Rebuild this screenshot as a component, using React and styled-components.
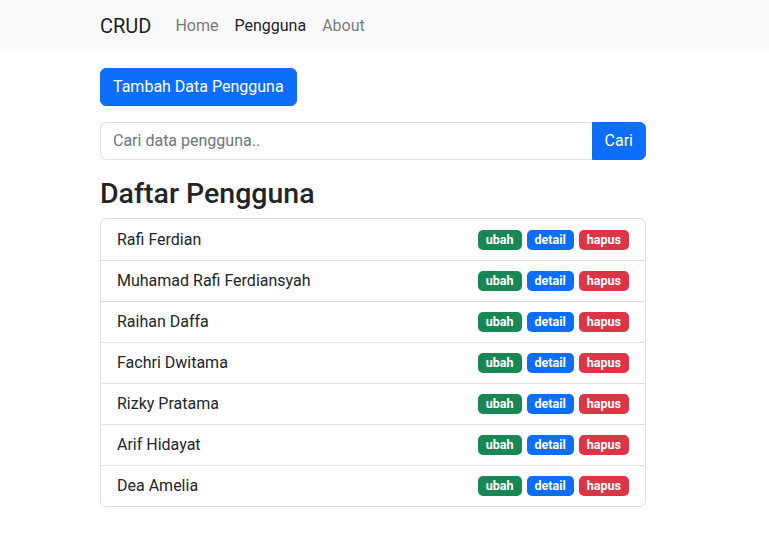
import React from "react";
import styled, { createGlobalStyle } from "styled-components";

const Global = createGlobalStyle`
  * { box-sizing: border-box; }
  body {
    margin: 0;
    font-family: "Segoe UI", Roboto, "Noto Sans", sans-serif;
    font-size: 16px;
    line-height: 1.5;
    color: #212529;
    background: #fff;
  }
`;

const Navbar = styled.nav`
  background: #f8f9fa;
  height: 51px;
  display: flex;
  align-items: center;
  padding-left: 100px;
`;

const Brand = styled.a`
  font-size: 20px;
  line-height: 30px;
  color: rgba(0, 0, 0, 0.9);
  margin-right: 16px;
  text-decoration: none;
`;

const NavLink = styled.a`
  padding: 8px;
  font-size: 16px;
  line-height: 24px;
  color: ${(p) => (p.$active ? "rgba(0,0,0,0.9)" : "rgba(0,0,0,0.55)")};
  text-decoration: none;
`;

const Main = styled.main`
  width: 546px;
  margin-left: 100px;
  padding-top: 17px;
  display: flex;
  flex-direction: column;
  align-items: flex-start;
`;

const Button = styled.button`
  font-family: inherit;
  font-size: 16px;
  line-height: 24px;
  padding: 6px 12px;
  border: 1px solid #0d6efd;
  background: #0d6efd;
  color: #fff;
  border-radius: ${(p) => p.$radius || "6px"};
`;

const SearchGroup = styled.form`
  display: flex;
  width: 100%;
  margin-top: 16px;
`;

const Input = styled.input`
  flex: 1;
  font-family: inherit;
  font-size: 16px;
  line-height: 24px;
  padding: 6px 12px;
  border: 1px solid #dee2e6;
  border-right: none;
  border-radius: 6px 0 0 6px;
  color: #212529;
  outline: none;
  &::placeholder { color: #6c757d; }
`;

const Heading = styled.h2`
  font-size: 28.5px;
  font-weight: 500;
  line-height: 1.2;
  margin: 17px 0 7px;
`;

const List = styled.ul`
  list-style: none;
  margin: 0;
  padding: 0;
  width: 100%;
  border: 1px solid #dee2e6;
  border-radius: 6px;
`;

const Item = styled.li`
  display: flex;
  align-items: center;
  justify-content: space-between;
  padding: 8px 16px;
  line-height: 24px;
  height: 41px;
  & + & { border-top: 1px solid #dee2e6; }
`;

const Badges = styled.div`
  display: flex;
  gap: 5px;
`;

const Badge = styled.a`
  display: inline-block;
  font-size: 12.5px;
  font-weight: 700;
  line-height: 12px;
  padding: 4px 8px;
  border-radius: 5px;
  color: #fff;
  background: ${(p) => p.$bg};
  text-decoration: none;
`;

const users = [
  "Rafi Ferdian",
  "Muhamad Rafi Ferdiansyah",
  "Raihan Daffa",
  "Fachri Dwitama",
  "Rizky Pratama",
  "Arif Hidayat",
  "Dea Amelia",
];

export default function App() {
  return (
    <>
      <Global />
      <Navbar>
        <Brand href="#">CRUD</Brand>
        <NavLink href="#">Home</NavLink>
        <NavLink href="#" $active>Pengguna</NavLink>
        <NavLink href="#">About</NavLink>
      </Navbar>
      <Main>
        <Button type="button">Tambah Data Pengguna</Button>
        <SearchGroup onSubmit={(e) => e.preventDefault()}>
          <Input placeholder="Cari data pengguna.." />
          <Button type="submit" $radius="0 6px 6px 0">Cari</Button>
        </SearchGroup>
        <Heading>Daftar Pengguna</Heading>
        <List>
          {users.map((u) => (
            <Item key={u}>
              <span>{u}</span>
              <Badges>
                <Badge href="#" $bg="#198754">ubah</Badge>
                <Badge href="#" $bg="#0d6efd">detail</Badge>
                <Badge href="#" $bg="#dc3545">hapus</Badge>
              </Badges>
            </Item>
          ))}
        </List>
      </Main>
    </>
  );
}
